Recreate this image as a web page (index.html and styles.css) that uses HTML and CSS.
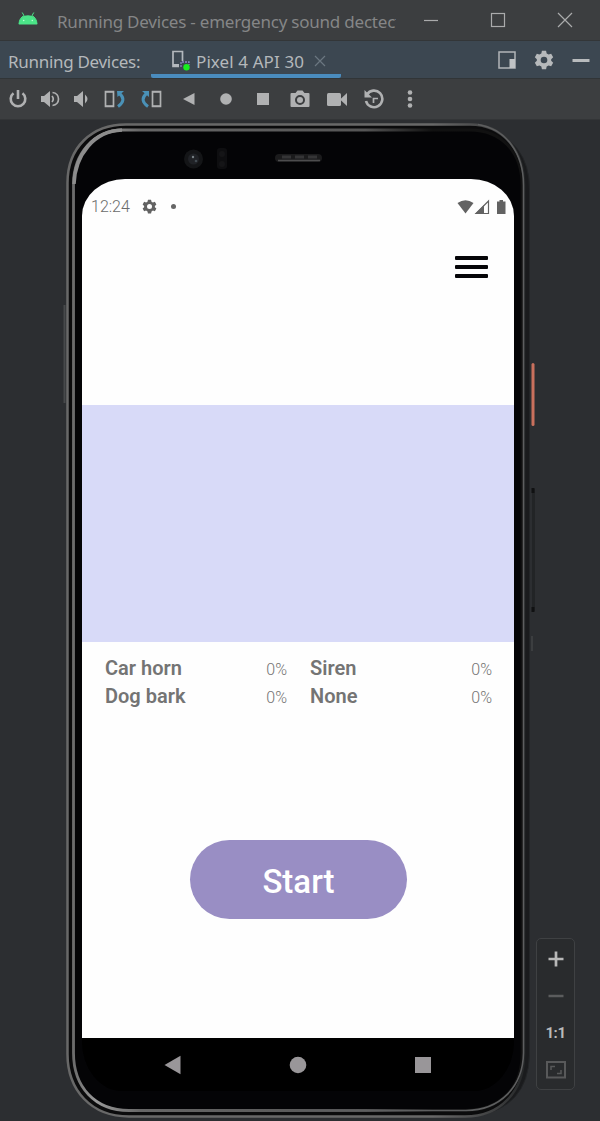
FILE: index.html
```html
<!DOCTYPE html>
<html lang="en">
<head>
<meta charset="utf-8">
<title>Running Devices</title>
<link rel="stylesheet" href="styles.css">
</head>
<body>
<div class="window">
  <header class="titlebar">
    <svg class="android" width="20" height="14" viewBox="0 0 20 14"><path d="M1 12Q1.300 6 6 3.600L4.200.5M19 12Q18.700 6 14 3.600L15.800.5" fill="none" stroke="#4be488" stroke-width="1"/><path d="M.8 12.500C1 6.500 5 3.200 10 3.200S19 6.500 19.200 12.500Z" fill="#4be488"/><circle cx="5.700" cy="8.500" r=".8" fill="#b8ffd3"/><circle cx="14.300" cy="8.500" r=".8" fill="#b8ffd3"/></svg>
    <div class="title">Running Devices - emergency sound dectect</div>
    <div class="window-buttons">
      <svg width="16" height="16" viewBox="0 0 16 16"><path d="M1 8.500H15"/></svg>
      <svg width="16" height="16" viewBox="0 0 16 16"><rect x="1.500" y="1.500" width="13" height="13"/></svg>
      <svg width="16" height="16" viewBox="0 0 16 16"><path d="M1 1L15 15M15 1L1 15"/></svg>
    </div>
  </header>

  <nav class="tabs">
    <div class="tabs-label">Running Devices:</div>
    <div class="tab">
      <svg class="tab-icon" width="20" height="22" viewBox="0 0 20 22"><path d="M8 17.500H2V2.500H11.500V12" fill="none" stroke="#b3b8bd" stroke-width="1.700"/><path d="M2 16.500H8" stroke="#b3b8bd" stroke-width="3"/><path d="M10 18V13H18V16" fill="none" stroke="#8c83c2" stroke-width="1.300" stroke-dasharray="2 1"/><circle cx="15.500" cy="18.300" r="3.200" fill="#18ef20"/></svg>
      <span class="tab-name">Pixel 4 API 30</span>
      <svg class="tab-close" width="12" height="12" viewBox="0 0 12 12"><path d="M1 1L11 11M11 1L1 11" stroke="#6b7780" stroke-width="1.200"/></svg>
    </div>
    <div class="tab-actions">
      <svg width="20" height="20" viewBox="0 0 20 20"><rect x="2" y="2" width="16" height="16" fill="none" stroke="#b1b5b8" stroke-width="1.500"/><rect x="12.500" y="9" width="5.500" height="9" fill="#c0c3c5"/></svg>
      <svg width="20" height="20" viewBox="0 0 24 24"><use href="#gear"/></svg>
      <svg width="20" height="20" viewBox="0 0 20 20"><path d="M1.500 10.500H18.500" stroke="#b8bbbd" stroke-width="3"/></svg>
    </div>
  </nav>

  <div class="toolbar">
    <svg width="20" height="20" viewBox="0 0 20 20"><path d="M10 1V10M5.500 4.200A7.300 7.300 0 1 0 14.500 4.200" class="line"/></svg>
    <svg width="20" height="20" viewBox="0 0 20 20"><path d="M1 7H4L10 2V18L4 13H1Z"/><path d="M12 7Q14.500 10 12 13M12.500 3.500C20.500 4.500 20.500 15.500 12.500 16.500" class="line thin"/></svg>
    <svg width="20" height="20" viewBox="0 0 20 20"><path d="M2 7H5L11 2V18L5 13H2Z"/><path d="M13 5.500Q18 10 13 14.500Z"/></svg>
    <svg width="22" height="20" viewBox="0 0 22 20"><path d="M1.500 2.500H9.500V17.500H1.500Z" class="line thin"/><path d="M1 3H10M1 17H10" class="line thin"/><path d="M14 17.500Q23 11 15.500 4.500" class="blue-line"/><path d="M13 2H20L13.500 8Z" class="blue"/></svg>
    <svg width="22" height="20" viewBox="0 0 22 20"><path d="M12.500 2.500H20.500V17.500H12.500Z" class="line thin"/><path d="M12 3H21M12 17H21" class="line thin"/><path d="M8 17.500Q-1 11 6.500 4.500" class="blue-line"/><path d="M9 8V2H2Z" class="blue"/></svg>
    <svg width="20" height="20" viewBox="0 0 20 20"><path d="M4 10L15.500 4V16Z"/></svg>
    <svg width="20" height="20" viewBox="0 0 20 20"><circle cx="10" cy="10" r="5.800"/></svg>
    <svg width="20" height="20" viewBox="0 0 20 20"><rect x="4" y="4" width="12" height="12"/></svg>
    <svg width="20" height="20" viewBox="0 0 20 20"><path fill-rule="evenodd" d="M1.500 4H5.500L7.500 1.500H12.500L14.500 4H18.500Q19.500 4 19.500 5V17Q19.500 18 18.500 18H1.500Q.5 18 .5 17V5Q.5 4 1.500 4ZM10 6A5 5 0 1 0 10 16A5 5 0 1 0 10 6Z"/><circle cx="10" cy="11" r="3"/></svg>
    <svg width="22" height="20" viewBox="0 0 22 20"><rect x="1" y="4" width="14" height="13" rx="1.500"/><path d="M14 10.500L21 4V17Z"/></svg>
    <svg width="22" height="20" viewBox="0 0 22 20"><path d="M4 5.500A8.300 8.300 0 1 1 3 12" class="line"/><path d="M1.500 1V8.500H9Z"/><path d="M10.500 14V9.500H15" class="line thin"/></svg>
    <svg width="20" height="20" viewBox="0 0 20 20"><circle cx="10" cy="3.500" r="2.300"/><circle cx="10" cy="10" r="2.300"/><circle cx="10" cy="16.500" r="2.300"/></svg>
  </div>

  <main class="stage">
    <svg class="phone-frame" width="600" height="1001" viewBox="0 120 600 1001">
      <defs>
        <linearGradient id="rim" x1="0" x2="1"><stop offset="0" stop-color="#686868"/><stop offset=".8" stop-color="#686868"/><stop offset=".95" stop-color="#3a3b3c"/><stop offset="1" stop-color="#242627"/></linearGradient>
        <linearGradient id="shine" x1="0" x2="1"><stop offset="0" stop-color="#6c6c6c"/><stop offset=".05" stop-color="#999"/><stop offset=".15" stop-color="#666"/><stop offset=".65" stop-color="#555"/><stop offset=".8" stop-color="#111"/><stop offset=".96" stop-color="#111"/><stop offset="1" stop-color="#111"/></linearGradient>
        <path id="gear" fill="#b6b9bb" fill-rule="evenodd" d="M9.500 1H14.500L15.200 4.200L17.500 5.500L20.600 4.500L23 8.800L20.600 11V13L23 15.200L20.600 19.500L17.500 18.500L15.200 19.800L14.500 23H9.500L8.800 19.800L6.500 18.500L3.400 19.500L1 15.200L3.400 13V11L1 8.800L3.400 4.500L6.500 5.500L8.800 4.200ZM12 8A4 4 0 1 0 12 16A4 4 0 1 0 12 8Z"/>
      </defs>
      <path d="M64.500 305V403" stroke="#47494b" stroke-width="2"/>
      <path d="M533.500 489V611" stroke="#222426" stroke-width="3"/>
      <path d="M533 488V493M533 607V612" stroke="#101112" stroke-width="3"/>
      <path d="M532 636V651" stroke="#3c3e40" stroke-width="2"/>
      <rect x="531.500" y="363" width="3" height="63" rx="1.500" fill="#c9705d"/>
      <path d="M480 126Q530 140 529.500 190V1055Q528 1108 475 1116" fill="#1a1b1d" stroke="#232527"/>
      <path d="M126 124.500H470C503 124.500 524 151 524 184V1055C524 1092 500 1116.500 465 1116.500H129C91 1116.500 67.500 1090 67.500 1054V183C67.500 147 92 124.500 126 124.500Z" fill="#0b0b0c" stroke="url(#rim)" stroke-width="2.500"/>
      <path d="M123 130H470C501 130 522 152 522 185V1054C522 1089 499 1110.500 465 1110.500H129C95 1110.500 73.500 1087 73.500 1053V184C73.500 154 94 130 123 130Z" fill="#040406" stroke="url(#shine)" stroke-width="2.800"/>
      <path d="M74 184C75 155 94 131 122 130" fill="none" stroke="#8d8d8d" stroke-width="3.500"/>
      <path d="M478 124.500C506 129 523.500 153 523.500 185V1053C523 1087 500 1110 466 1110.500H300" fill="none" stroke="#5d5e5f" stroke-width="1.600"/>
      <circle cx="193.500" cy="159" r="9.500" fill="#141517"/><circle cx="193.500" cy="159" r="5.500" fill="#202226"/><circle cx="193" cy="157" r="1.200" fill="#777f84"/><circle cx="196" cy="161" r="1.300" fill="#414a50"/>
      <rect x="217" y="148" width="10" height="21" rx="3" fill="#0e0e10"/><circle cx="222" cy="154" r="3" fill="#151517"/><circle cx="222" cy="164" r="3" fill="#151517"/>
      <rect x="275" y="154" width="47" height="8" rx="4" fill="#1b1b1c"/><path d="M278 160.500H320" stroke="#4d4d4e" stroke-width="1.600"/><path d="M282 157H318" stroke="#353536" stroke-width="3" stroke-dasharray="9 4"/>
    </svg>

    <section class="screen">
      <div class="status">
        <span class="clock">12:24</span>
        <svg class="status-gear" width="15" height="15" viewBox="0 0 24 24"><path fill="#626262" fill-rule="evenodd" d="M9.500 1H14.500L15.200 4.200L17.500 5.500L20.600 4.500L23 8.800L20.600 11V13L23 15.200L20.600 19.500L17.500 18.500L15.200 19.800L14.500 23H9.500L8.800 19.800L6.500 18.500L3.400 19.500L1 15.200L3.400 13V11L1 8.800L3.400 4.500L6.500 5.500L8.800 4.200ZM12 8A4 4 0 1 0 12 16A4 4 0 1 0 12 8Z"/></svg>
        <span class="dot"></span>
        <svg class="signals" width="50" height="16" viewBox="0 0 50 16"><path d="M.5 4Q8.500-1.500 16.500 4L8.500 14.500Z" fill="#626262"/><path d="M19 14.500L31.500 2V14.500Z" fill="none" stroke="#626262" stroke-width="1.200"/><path d="M18 15L27 6V15Z" fill="#626262"/><path d="M40 2.500H42.500V1H46V2.500H48.500V15H40Z" fill="#626262"/></svg>
      </div>
      <div class="app-header"><button class="menu" aria-label="Menu"><i></i><i></i><i></i></button></div>
      <div class="visualizer"></div>
      <div class="results">
        <div class="result"><b>Car horn</b><span>0%</span></div>
        <div class="result"><b>Siren</b><span>0%</span></div>
        <div class="result"><b>Dog bark</b><span>0%</span></div>
        <div class="result"><b>None</b><span>0%</span></div>
      </div>
      <button class="start">Start</button>
      <div class="android-nav">
        <svg width="20" height="20" viewBox="0 0 20 20"><path d="M1.500 10L17.500 .8V19.200Z"/></svg>
        <svg width="20" height="20" viewBox="0 0 20 20"><circle cx="10" cy="10" r="8.300"/></svg>
        <svg width="20" height="20" viewBox="0 0 20 20"><rect x="2" y="2" width="16" height="16"/></svg>
      </div>
    </section>

    <aside class="zoom-panel">
      <svg width="20" height="20" viewBox="0 0 20 20"><path d="M2.500 10H17.500M10 2.500V17.500" stroke="#b8b8b8" stroke-width="2.700"/></svg>
      <svg width="20" height="20" viewBox="0 0 20 20"><path d="M2.500 10H17.500" stroke="#5b5c5d" stroke-width="2.500"/></svg>
      <span class="ratio">1:1</span>
      <svg width="20" height="20" viewBox="0 0 20 20"><rect x="1" y="2" width="18" height="15.500" fill="none" stroke="#58595a" stroke-width="2"/><path d="M5 10V6.500H9M15 10V13.500H11" fill="none" stroke="#58595a" stroke-width="1.500"/></svg>
    </aside>
  </main>
</div>
</body>
</html>
```
FILE: styles.css
```css
* { box-sizing: border-box; }
body { margin: 0; background: #2c2e31; font-family: "Noto Sans", sans-serif; }
svg { display: block; flex-shrink: 0; }
button { border: 0; padding: 0; font: inherit; }
.window { width: 600px; height: 1121px; overflow: hidden; }

.titlebar { display: flex; align-items: center; height: 41px; padding: 0 27px 0 18px; background: #3c3e40; border-bottom: 1px solid #333638; }
.android { margin-top: -2px; }
.title { width: 339px; margin-left: 19px; overflow: hidden; white-space: nowrap; color: #858687; font-size: 17px; letter-spacing: -0.22px; padding-top: 3px; }
.window-buttons { display: flex; gap: 51px; margin-left: auto; }
.window-buttons svg { fill: none; stroke: #aaabac; stroke-width: 1.2; }

.tabs { display: flex; height: 38px; background: #3c4751; border-bottom: 1px solid #313537; color: #b4b8bb; font-size: 17px; white-space: nowrap; }
.tabs-label { width: 151px; padding-left: 8px; line-height: 42px; letter-spacing: -0.3px; }
.tab { display: flex; align-items: center; width: 190px; padding: 0 0 0 20px; border-bottom: 4px solid #4a8cbe; border-radius: 2px; }
.tab-icon { margin-top: 4px; }
.tab-name { width: 109px; margin: 7px 0 0 5px; letter-spacing: 0.1px; }
.tab-close { margin: 7px 0 0 9px; }
.tab-actions { display: flex; gap: 17px; padding-top: 9px; margin: 0 9px 0 auto; }

.toolbar { display: grid; grid-template-columns: 32px 32px 32px 34px 38px 38px 36px 38px 36px 38px 36px 36px; place-items: center; height: 41px; padding: 0 0 0 2px; background: #3c3e40; border-bottom: 1px solid #333537; fill: #b0b1b2; }
.line { fill: none; stroke: #b0b1b2; stroke-width: 2.6; }
.thin { stroke-width: 1.7; }
.blue { fill: #4a91b7; }
.blue-line { fill: none; stroke: #4a91b7; stroke-width: 3; }

.stage { position: relative; display: flex; align-items: flex-start; height: 1001px; padding: 59px 0 0 82px; }
.phone-frame { position: absolute; left: 0; top: 0; }
.screen { position: relative; display: flex; flex-direction: column; width: 432px; height: 912px; border-radius: 43px 43px 0 0 / 37px 37px 0 0; overflow: hidden; background: #fefefe; font-family: Roboto, sans-serif; }
.status { display: flex; align-items: center; height: 55px; padding: 0 7px 0 9px; color: #6b6b6b; }
.clock { width: 39px; font-size: 16px; font-weight: 300; line-height: 20px; }
.status-gear { margin-left: 12px; }
.dot { width: 5px; height: 5px; margin-left: 14px; border-radius: 50%; background: #666; }
.signals { margin-left: auto; }
.app-header { display: flex; justify-content: flex-end; height: 171px; padding: 22px 26px 0 0; }
.menu { display: flex; flex-direction: column; gap: 5px; width: 33px; height: 23px; background: none; }
.menu i { width: 33px; height: 4px; background: #050508; border-radius: 1px; }
.visualizer { height: 237px; background: #d8daf8; }
.results { display: grid; grid-template-columns: 182px 182px; grid-auto-rows: 28px; column-gap: 23px; height: 198px; padding: 12px 22px 0 23px; color: #747474; }
.result { display: flex; align-items: center; justify-content: space-between; }
.result b { font-size: 20px; font-weight: 600; }
.result span { font-size: 16px; font-weight: 300; padding-top: 2px; }
.start { width: 217px; height: 79px; margin-left: 108px; flex-shrink: 0; border-radius: 40px; background: #998ec4; color: #fff; font-size: 33px; font-weight: 500; padding-top: 4px; }
.android-nav { display: flex; align-items: center; justify-content: center; gap: 105px; height: 53px; margin-top: auto; background: #000; border-radius: 0 0 40px 40px / 0 0 50px 50px; fill: #999699; }
.screen { background: linear-gradient(#fefefe 859px, #000 859px); border-radius: 43px 43px 40px 40px / 37px 37px 50px 50px; }

.zoom-panel { position: relative; display: flex; flex-direction: column; align-items: center; gap: 17px; width: 39px; height: 152px; margin: 759px 0 0 22px; padding-top: 10px; border: 1px solid #3f4143; border-radius: 5px; background: #292b2d; }
.ratio { height: 20px; color: #bababa; font: 700 15px/20px Roboto, sans-serif; letter-spacing: -0.4px; }
```
